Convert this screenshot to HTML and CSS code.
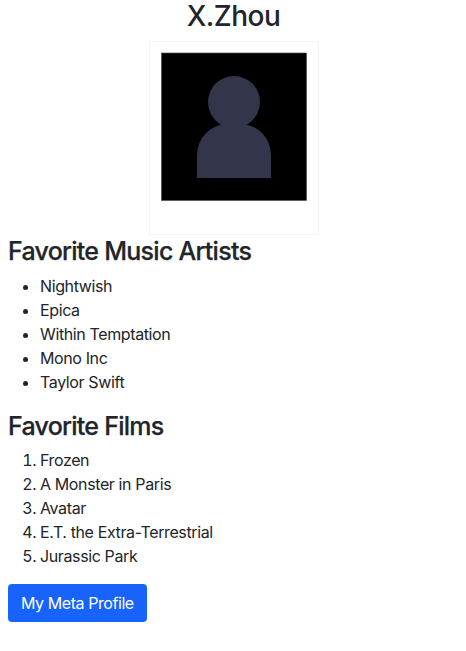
FILE: index.html
```html
<!DOCTYPE html>
<html lang="en">
<head>
<meta charset="utf-8">
<title>X.Zhou</title>
<link rel="stylesheet" href="styles.css">
</head>
<body>
<main class="profile">
<h1 class="name">X.Zhou</h1>
<div class="portrait">
<svg class="avatar" viewBox="0 0 170 194" role="img" aria-label="Profile picture">
<rect x="0.5" y="0.5" width="169" height="193" fill="none" stroke="#f5f5f5"/>
<rect x="12.5" y="12" width="145" height="147.5" fill="#000" stroke="#4a4648" stroke-width="0.6"/>
<circle cx="85" cy="61" r="26" fill="#33364a"/>
<path d="M48 137V114A31 31 0 0 1 79 83H91A31 31 0 0 1 122 114V137Z" fill="#33364a"/>
</svg>
</div>
<h2 class="heading">Favorite Music Artists</h2>
<ul class="list">
<li>Nightwish</li><li>Epica</li><li>Within Temptation</li><li>Mono Inc</li><li>Taylor Swift</li>
</ul>
<h2 class="heading films">Favorite Films</h2>
<ol class="list">
<li>Frozen</li><li>A Monster in Paris</li><li>Avatar</li><li>E.T. the Extra-Terrestrial</li><li>Jurassic Park</li>
</ol>
<a class="button" href="#">My Meta Profile</a>
</main>
</body>
</html>
```
FILE: styles.css
```css
* { box-sizing: border-box; }
body { margin: 0; background: #fff; color: #212529; font: 16px/24px Inter, sans-serif; letter-spacing: -0.38px; }
.profile { padding: 0 8px; }
.name { margin: 0 0 8px; padding-left: 1px; text-align: center; font-size: 28px; line-height: 33px; font-weight: 500; letter-spacing: -0.5px; }
.portrait { display: flex; justify-content: center; height: 194px; padding-left: 2px; }
.avatar { width: 170px; height: 194px; }
.heading { margin: 1px 0 8px; font-size: 25px; line-height: 30px; font-weight: 500; letter-spacing: -0.74px; -webkit-text-stroke: 0.25px currentColor; }
.films { margin: 17px 0 7px; }
.list { margin: 0 0 16px; padding-left: 32px; }
.button { display: inline-block; padding: 7px 13px; border-radius: 4px; background: #1763fc; color: #fff; text-decoration: none; letter-spacing: -0.43px; }
```
